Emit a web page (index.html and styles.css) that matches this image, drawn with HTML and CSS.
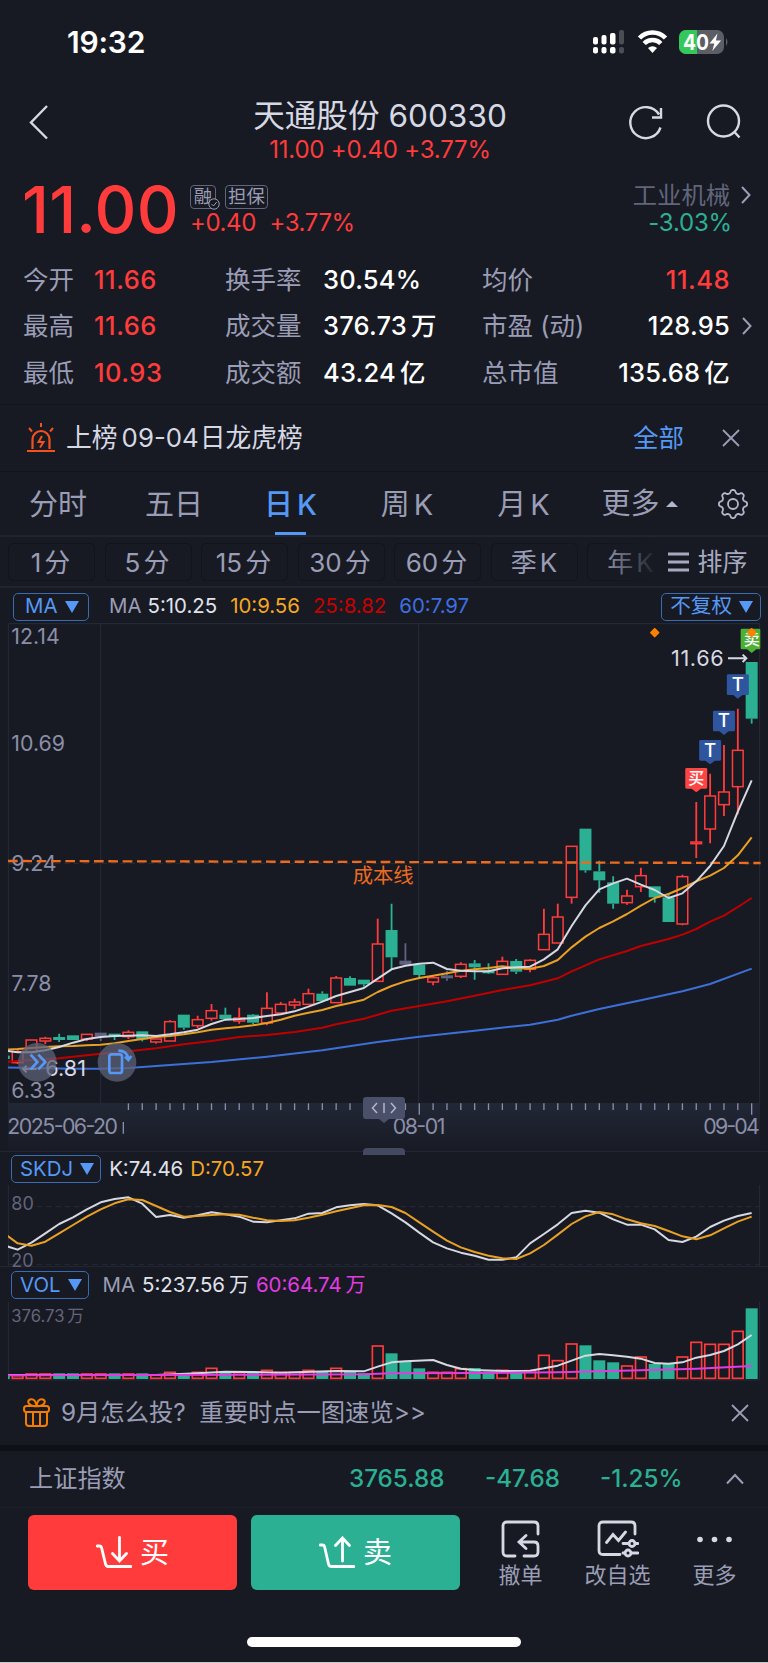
FILE: index.html
```html
<!DOCTYPE html>
<html lang="zh-CN">
<head>
    <meta charset="UTF-8">
    <meta name="viewport" content="width=device-width, initial-scale=1.0">
    <title>天通股份 600330</title>
    <link rel="stylesheet" href="styles.css">
</head>
<body>
    <div class="status-bar">
        <span class="time">19:32</span>
        <svg class="status-icons" width="140" height="30" viewBox="0 0 140 30">
            <g fill="#fff">
                <rect x="3" y="10" width="5" height="7.500" rx="2"/>
                <rect x="11.5" y="8" width="5" height="9.500" rx="2"/>
                <rect x="20" y="6" width="5.5" height="11.500" rx="2"/>
                <rect x="3" y="20" width="5" height="6.500" rx="2"/>
                <rect x="11.5" y="20" width="5" height="6.500" rx="2"/>
                <rect x="20" y="20" width="5.5" height="6.500" rx="2"/>
            </g>
            <g fill="#4b4d55">
                <rect x="29" y="3" width="5" height="14.500" rx="2"/>
                <rect x="29" y="20" width="5" height="6.500" rx="2"/>
            </g>
            <g fill="none" stroke="#fff" stroke-width="4.6">
                <path d="M49.5 11a18 18 0 0 1 26 0"/>
                <path d="M54.2 16.500a11.6 11.6 0 0 1 16.6 0"/>
            </g>
            <path d="M58 21a6.6 6.6 0 0 1 9 0l-4.5 5z" fill="#fff"/>
            <rect x="89" y="3" width="45" height="24" rx="7" fill="#5c5e66"/>
            <path d="M96 3h11v24H96a7 7 0 0 1-7-7V10a7 7 0 0 1 7-7z" fill="#34c759"/>
            <path d="M136 11q3 4 0 8z" fill="#5c5e66"/>
            <text x="93" y="22.500" class="battery" textLength="26" lengthAdjust="spacingAndGlyphs">40</text>
            <path d="M127.500 6.500l-8 10h4.800l-2 7.500 8.800-10.500h-5.200z" fill="#fff"/>
        </svg>
    </div>

    <header class="header">
        <svg class="back" width="24" height="40" viewBox="0 0 24 40"><path d="M19 4L3 20.500l16 16" /></svg>
        <div class="title">
            <h1>天通股份 600330</h1>
            <p>11.00 +0.40 +3.77%</p>
        </div>
        <div class="header-icons">
            <svg width="40" height="40" viewBox="0 0 40 40"><path d="M34.500 25.500a15.500 15.500 0 1 1-1.500-13M35 6v9.500h-9"/></svg>
            <svg width="40" height="40" viewBox="0 0 40 40"><circle cx="19.500" cy="19" r="15.500"/><path d="M30.500 30l5 5.500"/></svg>
        </div>
    </header>

    <section class="quote">
        <div class="price">11.00</div>
        <div class="price-side">
            <div class="tags">
                <span class="tag">融<svg width="12" height="12" viewBox="0 0 12 12"><circle cx="6" cy="6" r="5.200"/><path d="M3.500 6l2 2 3.200-4"/></svg></span>
                <span class="tag wide">担保</span>
            </div>
            <div class="change"><span>+0.40</span><span>+3.77%</span></div>
        </div>
        <div class="industry">
            <div>工业机械</div>
            <div class="green">-3.03%</div>
        </div>
        <svg class="arrow" width="12" height="20" viewBox="0 0 12 20"><path d="M2 2l7.500 8L2 18"/></svg>
    </section>

    <section class="stats">
        <span>今开</span><b class="red">11.66</b><span>换手率</span><b>30.54%</b><span>均价</span><b class="red right">11.48</b><i></i>
        <span>最高</span><b class="red">11.66</b><span>成交量</span><b>376.73<em>万</em></b><span>市盈 (动)</span><b class="right">128.95</b><svg class="arrow" width="12" height="20" viewBox="0 0 12 20"><path d="M2 2l7.500 8L2 18"/></svg>
        <span>最低</span><b class="red">10.93</b><span>成交额</span><b>43.24<em>亿</em></b><span>总市值</span><b class="right">135.68<em>亿</em></b><i></i>
    </section>

    <section class="notice">
        <svg width="28" height="30" viewBox="0 0 28 30" fill="none" stroke="#f4511e" stroke-width="2">
            <path d="M5.500 26V16.500a8.500 8.500 0 0 1 17 0V26M0 28h28" stroke-width="2.200"/>
            <path d="M14 0v4M2 5l3 3.500M26 5l-3 3.500"/>
            <path d="M15 13l-3.500 6h5L13 24.500"/>
        </svg>
        <p>上榜<span>09-04</span>日龙虎榜</p>
        <a>全部</a>
        <svg class="close" width="20" height="20" viewBox="0 0 20 20"><path d="M2 2l16 16M18 2L2 18"/></svg>
    </section>

    <nav class="tabs">
        <span>分时</span>
        <span>五日</span>
        <span class="active">日<i>K</i></span>
        <span>周<i>K</i></span>
        <span>月<i>K</i></span>
        <span class="more">更多<svg width="12" height="8" viewBox="0 0 12 8"><path d="M0 7l6-6 6 6z" fill="#b4b7cc"/></svg></span>
        <svg class="gear" id="gear" width="32" height="32" viewBox="-16 -16 32 32"></svg>
    </nav>

    <div class="periods">
        <span>1<i>分</i></span>
        <span>5<i>分</i></span>
        <span>15<i>分</i></span>
        <span>30<i>分</i></span>
        <span>60<i>分</i></span>
        <span>季<i>K</i></span>
        <span>年<i>K</i></span>
        <div class="sort">
            <svg width="22" height="20" viewBox="0 0 22 20"><path d="M0 2h21M0 10h21M0 18h21" stroke="#a6a9c0" stroke-width="2.800"/></svg>
            排序
        </div>
    </div>

    <div class="legend ma-legend">
        <span class="pill">MA<i></i></span>
        <span class="name">MA</span>
        <span class="c-white">5:10.25</span>
        <span class="c-orange">10:9.56</span>
        <span class="c-red">25:8.82</span>
        <span class="c-blue">60:7.97</span>
        <span class="pill last">不复权<i></i></span>
    </div>

    <!-- drawing units are a third of a pixel in all the charts -->
    <svg class="chart" width="768" height="480" viewBox="0 9 2304 1440">
        <clipPath id="plot"><rect x="24" y="0" width="2256" height="1449"/></clipPath>
        <path class="grid" d="M25 1449V11H2279V1449M302 11V1449M1256 11V1449"/>
        <path class="grid dash" d="M25 731H2279"/>
        <g class="axis">
            <text x="34" y="72">12.14</text>
            <text x="34" y="393">10.69</text>
            <text x="34" y="753">9.24</text>
            <text x="34" y="1113">7.78</text>
            <text x="34" y="1434">6.33</text>
        </g>
        <g id="candles" clip-path="url(#plot)"></g>
        <path class="cost" d="M24 723L2282 729"/>
        <text class="cost-label" x="1058" y="790">成本线</text>
        <g id="averages" clip-path="url(#plot)"></g>
        <text class="extreme" x="136" y="1369">6.81</text>
        <path class="hint" d="M110 1347H70M80 1337L69 1347L80 1357"/>
        <text class="extreme" x="2013" y="138" textLength="158">11.66</text>
        <path class="hint" d="M2184 115H2238M2228 104L2239 115L2228 126"/>
        <g id="marks"></g>
        <circle class="float" cx="112" cy="1327" r="58"/>
        <path class="float-icon" d="M92 1304L112 1326L92 1348M115 1304L136 1326L115 1348"/>
        <circle class="float" cx="351" cy="1327" r="58"/>
        <rect class="float-icon" x="328" y="1303" width="38" height="56" rx="7"/>
        <path class="float-icon" d="M355 1292Q382 1292 385 1318M375 1310L385 1320L394 1308"/>
    </svg>

    <div class="time-axis">
        <svg width="768" height="48" viewBox="0 1449 2304 144">
            <g id="ticks"></g>
            <g class="axis">
                <text x="22" y="1543" textLength="332">2025-06-20</text>
                <text x="1178" y="1543" textLength="158">08-01</text>
                <text x="2110" y="1543" textLength="169">09-04</text>
            </g>
        </svg>
        <svg class="handle" width="42" height="26" viewBox="0 0 42 26">
            <path d="M3 0h36q3 0 3 3v16q0 3-3 3H26l-5 4-5-4H3q-3 0-3-3V3q0-3 3-3z" fill="#4a5069"/>
            <path d="M14 6l-4.500 5 4.500 5M28 6l4.500 5-4.500 5M21 6v10" fill="none" stroke="#b4b7cc" stroke-width="1.500"/>
        </svg>
        <div class="grip"></div>
    </div>

    <div class="legend sub-legend">
        <span class="pill">SKDJ<i></i></span>
        <span class="c-white">K:74.46</span>
        <span class="c-orange">D:70.57</span>
    </div>
    <svg class="chart skdj" width="768" height="81" viewBox="0 285 2304 243">
        <path class="grid" d="M25 285V528M2279 285V528"/>
        <path class="grid dash" d="M110 350H2279M25 523H2279"/>
        <g class="axis dim">
            <text x="34" y="360">80</text>
            <text x="34" y="532">20</text>
        </g>
        <g id="skdj" clip-path="url(#plot)"></g>
    </svg>

    <div class="legend vol-legend">
        <span class="pill">VOL<i></i></span>
        <span class="name">MA</span>
        <span class="c-white">5:237.56<em>万</em></span>
        <span class="c-pink">60:64.74<em>万</em></span>
    </div>
    <svg class="chart vol" width="768" height="79" viewBox="0 636 2304 237">
        <path class="grid" d="M25 636V870H2279V636"/>
        <text class="axis dim small" x="34" y="697">376.73<tspan dx="8">万</tspan></text>
        <g id="volume" clip-path="url(#plot)"></g>
    </svg>

    <section class="promo">
        <svg width="27" height="29" viewBox="0 0 27 29" fill="none" stroke="#f57c00" stroke-width="2">
            <rect x="1" y="8" width="25" height="6" rx="2.500"/>
            <path d="M3 14v11q0 3 3 3h15q3 0 3-3V14M10 15v12M17 15v12M13.500 8C6 9 3 3 7 1.500S13 4 13.500 8C14 4 16 0 20 1.500S21 9 13.500 8"/>
        </svg>
        <p>9月怎么投? &nbsp;重要时点一图速览&gt;&gt;</p>
        <svg class="close" width="20" height="20" viewBox="0 0 20 20"><path d="M2 2l16 16M18 2L2 18"/></svg>
    </section>

    <section class="index-row">
        <span>上证指数</span>
        <b>3765.88</b>
        <b>-47.68</b>
        <b>-1.25%</b>
        <svg class="arrow" width="18" height="12" viewBox="0 0 18 12"><path d="M1 10.500l8-8.500 8 8.500"/></svg>
    </section>

    <footer class="actions">
        <button class="buy">
            <svg width="36" height="34" viewBox="0 0 36 34"><path d="M1 10h2.500q1.500 0 2 1.500L9.500 28q.5 2.500 3 2.500H35M23.500 1.500v23M16.500 17.500l7 7.500 7-7.500"/></svg>买
        </button>
        <button class="sell">
            <svg width="36" height="34" viewBox="0 0 36 34"><path d="M1 9h2.500q1.500 0 2 1.500L9.500 28q.5 2.500 3 2.500H35M23.500 25V2M16.500 9.500l7-7.500 7 7.500"/></svg>卖
        </button>
        <div class="action">
            <svg width="40" height="38" viewBox="0 0 40 38"><path d="M14 36H6q-4 0-4-4V6q0-4 4-4h27q4 0 4 4v8M23 36h10q4 0 4-4v-6q0-4-4-4H18.500M25 15.500L18 22l7 6.500"/></svg>
            撤单
        </div>
        <div class="action">
            <svg width="42" height="38" viewBox="0 0 42 38"><path d="M23 34.500H6q-4 0-4-4V6q0-4 4-4h28q4 0 4 4v8M9.500 22.500l6.500-8 5.500 6L28.500 12M26 23.500h6M38 23.500h3M26 33h2M34 33h7"/><circle cx="35" cy="23.500" r="3"/><circle cx="31" cy="33" r="3"/></svg>
            改自选
        </div>
        <div class="action">
            <svg width="40" height="38" viewBox="0 0 40 38"><g class="dots"><circle cx="5" cy="19.500" r="2.800"/><circle cx="19.500" cy="19.500" r="2.800"/><circle cx="34" cy="19.500" r="2.800"/></g></svg>
            更多
        </div>
    </footer>
    <div class="home-bar"></div>

    <script>
        // type, high, top, bottom, low: r = up, g = down, n = flat
        const candles = [
            ['g', 1305, 1307, 1317, 1322], ['r', 1290, 1295, 1328, 1332], ['r', 1260, 1260, 1297, 1300],
            ['r', 1250, 1255, 1263, 1272], ['g', 1241, 1251, 1260, 1266], ['g', 1246, 1246, 1260, 1260],
            ['r', 1243, 1243, 1257, 1263], ['n', 1238, 1238, 1250, 1263], ['g', 1241, 1241, 1248, 1260],
            ['r', 1231, 1237, 1250, 1257], ['g', 1234, 1234, 1258, 1264], ['r', 1257, 1257, 1266, 1271],
            ['r', 1201, 1205, 1263, 1263], ['g', 1184, 1184, 1223, 1229], ['r', 1187, 1199, 1217, 1224],
            ['r', 1152, 1172, 1195, 1202], ['g', 1163, 1184, 1197, 1197], ['r', 1163, 1194, 1203, 1211],
            ['g', 1182, 1184, 1208, 1213], ['r', 1117, 1165, 1209, 1216], ['r', 1146, 1153, 1179, 1179],
            ['r', 1136, 1146, 1155, 1166], ['r', 1106, 1121, 1153, 1153], ['g', 1114, 1121, 1143, 1143],
            ['r', 1068, 1074, 1148, 1148], ['g', 1069, 1074, 1097, 1097], ['g', 1079, 1079, 1093, 1100],
            ['r', 896, 972, 1084, 1084], ['g', 851, 930, 1012, 1047], ['n', 970, 1022, 1034, 1038],
            ['g', 1030, 1034, 1065, 1073], ['r', 1068, 1073, 1086, 1096], ['n', 1052, 1066, 1075, 1082],
            ['r', 1027, 1033, 1069, 1074], ['g', 1020, 1030, 1042, 1079], ['g', 1030, 1052, 1060, 1062],
            ['r', 1010, 1024, 1063, 1063], ['g', 1017, 1023, 1055, 1062], ['r', 1018, 1021, 1048, 1057],
            ['r', 866, 943, 989, 989], ['r', 851, 891, 969, 969], ['r', 679, 679, 832, 851],
            ['g', 626, 626, 751, 758], ['g', 722, 754, 781, 818], ['g', 769, 787, 851, 866],
            ['r', 809, 828, 848, 854], ['r', 743, 767, 800, 816], ['g', 799, 799, 832, 848],
            ['g', 820, 832, 906, 906], ['r', 764, 770, 912, 916], ['r', 546, 666, 671, 714],
            ['r', 461, 528, 627, 670], ['r', 375, 516, 554, 588], ['r', 266, 391, 500, 583],
            ['g', 126, 126, 296, 311]
        ];
        const ma5 = [1291, 1297, 1297, 1291, 1281, 1268, 1257, 1251, 1248, 1247, 1246, 1248, 1243, 1237, 1229, 1212, 1199, 1197, 1194, 1188, 1183, 1174, 1160, 1145, 1128, 1116, 1104, 1076, 1048, 1037, 1031, 1028, 1047, 1052, 1054, 1054, 1045, 1042, 1040, 1018, 988, 918, 856, 808, 790, 776, 794, 810, 834, 820, 784, 738, 678, 575, 481];
        const ma10 = [1289, 1287, 1284, 1281, 1279, 1278, 1276, 1274, 1270, 1263, 1257, 1251, 1248, 1243, 1237, 1229, 1225, 1221, 1216, 1209, 1199, 1187, 1178, 1170, 1158, 1149, 1139, 1116, 1098, 1084, 1074, 1067, 1060, 1052, 1048, 1044, 1039, 1044, 1046, 1038, 1020, 982, 950, 924, 904, 882, 857, 834, 822, 804, 784, 767, 744, 706, 652];
        const ma25 = [[0, 1326], [1, 1323], [4, 1315], [7, 1301], [9, 1294], [11, 1285], [13, 1273], [15, 1263], [17, 1251], [19, 1245], [21, 1236], [23, 1223], [24, 1213], [26, 1196], [27, 1184], [28, 1172], [30, 1158], [32, 1144], [34, 1127], [36, 1110], [38, 1096], [40, 1075], [41, 1054], [43, 1018], [45, 993], [46, 978], [48, 957], [49, 944], [50, 927], [51, 905], [52, 887], [53, 861], [54, 834]];
        const ma60 = [[0, 1342], [3, 1345], [5, 1346], [7, 1346], [9, 1344], [11, 1338], [15, 1326], [19, 1310], [23, 1291], [27, 1266], [30, 1250], [34, 1232], [38, 1214], [40, 1199], [41, 1187], [43, 1167], [46, 1141], [49, 1114], [51, 1092], [54, 1046]];
        const k = [466, 479, 458, 430, 402, 382, 358, 337, 327, 322, 341, 381, 375, 383, 376, 367, 373, 380, 395, 397, 391, 385, 371, 369, 352, 346, 342, 346, 370, 397, 428, 457, 475, 488, 497, 509, 509, 502, 460, 432, 403, 369, 362, 368, 388, 404, 404, 418, 450, 456, 440, 411, 392, 378, 369];
        const d = [429, 460, 467, 455, 430, 405, 380, 358, 340, 328, 330, 348, 366, 380, 378, 375, 373, 374, 383, 391, 393, 391, 383, 374, 364, 355, 346, 345, 351, 369, 397, 425, 452, 472, 486, 497, 505, 507, 490, 465, 434, 402, 379, 366, 373, 388, 400, 408, 423, 439, 448, 436, 415, 395, 380];
        const volume = [857, 857, 852, 852, 850, 850, 852, 852, 850, 852, 850, 855, 847, 852, 847, 835, 845, 848, 848, 841, 847, 847, 841, 845, 835, 845, 850, 768, 790, 815, 835, 847, 847, 836, 834, 845, 841, 845, 842, 796, 812, 762, 766, 811, 817, 828, 801, 822, 822, 801, 757, 763, 763, 724, 655];
        const vol5 = [[0, 855], [11, 855], [14, 850], [16, 845], [18, 846], [20, 848], [24, 843], [26, 844], [27, 830], [28, 817], [29, 814], [31, 810], [32, 825], [33, 836], [34, 840], [36, 843], [38, 842], [39, 835], [40, 827], [41, 812], [42, 797], [43, 792], [44, 796], [45, 800], [46, 806], [47, 819], [48, 821], [49, 817], [50, 803], [51, 795], [52, 783], [53, 763], [54, 735]];
        const vol60 = [[0, 856], [26, 853], [28, 850], [34, 849], [40, 847], [46, 841], [50, 836], [54, 828]];

        const x = i => 2255 - (54 - i) * 41.55;
        const put = (id, html) => { document.getElementById(id).innerHTML = html; };

        function line(cls, data) {
            const points = data.map((p, i) => Array.isArray(p) ? `${x(p[0])},${p[1]}` : `${x(i)},${p}`);
            return `<polyline class="line ${cls}" points="${points.join(' ')}"/>`;
        }

        function bar(type, i, top, bottom) {
            if (type === 'r') {
                return `<rect class="r" x="${x(i) - 16}" y="${top}" width="32" height="${bottom - top}"/>`;
            }
            return `<rect class="${type}" x="${x(i) - 18}" y="${top}" width="36" height="${bottom - top}"/>`;
        }

        put('candles', candles.map(([type, high, top, bottom, low], i) =>
            `<path class="wick ${type}" d="M${x(i)} ${high}V${top}M${x(i)} ${bottom}V${low}"/>` + bar(type, i, top, bottom)
        ).join(''));

        put('averages', line('s-blue', ma60) + line('s-red', ma25) + line('s-orange', ma10) + line('s-white', ma5));
        put('skdj', line('s-white', k) + line('s-orange', d));

        put('volume', volume.map((top, i) => {
            let type = candles[i][0];
            if (type === 'n') type = i === 29 ? 'g' : 'r';
            return type === 'r' ? bar(type, i, top, 865) : bar(type, i, top, 867);
        }).join('') + line('s-white', vol5) + line('s-pink', vol60));

        // trade marks above the candles
        const marks = [[50, 444, '买', '#ff4444'], [51, 360, 'T', '#2f559f'], [52, 272, 'T', '#2f559f'], [53, 163, 'T', '#2f559f'], [54, 26, '卖', '#4cb034']];
        put('marks', marks.map(([i, y, label, color]) => {
            const w = i === 54 ? 59 : 66;
            return `<path fill="${color}" d="M${x(i) - 33} ${y + 4}q0-4 4-4h${w - 8}q4 0 4 4v54q0 4-4 4H${x(i) + 14}l-14 11-14-11H${x(i) - 29}q-4 0-4-4z"/>` +
                `<text class="mark" x="${x(i)}" y="${y + (label === 'T' ? 50 : 49)}" font-size="${label === 'T' ? 56 : 48}">${label}</text>`;
        }).join('') + [47, 54].map(i => `<path class="diamond" d="M${x(i)} 27L${x(i) + 11} 38L${x(i)} 49L${x(i) - 11} 38z"/>`).join(''));

        let ticks = '<path d="M370 1506V1541"/>';
        for (let i = 9; i <= 54; i++) {
            ticks += `<path d="M${x(i)} 1450V${i === 30 || i === 54 ? 1484 : 1470}"/>`;
        }
        put('ticks', ticks);

        // eight-toothed gear outline
        const gear = [];
        for (let a = 0; a < 360; a += 3) {
            const r = 12.6 + 1.6 * Math.tanh(1.6 * Math.cos(a * 8 * Math.PI / 180));
            gear.push((r * Math.sin(a * Math.PI / 180)).toFixed(2) + ',' + (-r * Math.cos(a * Math.PI / 180)).toFixed(2));
        }
        put('gear', `<polygon points="${gear.join(' ')}"/><circle r="5"/>`);
    </script>
</body>
</html>
```
FILE: styles.css
```css
* {
    box-sizing: border-box;
}

body {
    margin: 0;
    width: 768px;
    height: 1663px;
    overflow: hidden;
    background: #171a22;
    color: #9a9db5;
    font-family: Inter, "Noto Sans CJK SC", sans-serif;
    font-size: 25.5px;
    line-height: 1;
    border-bottom: 1px solid #c9cacc;
}

svg {
    display: block;
    flex: none;
}

h1, p {
    margin: 0;
    font-weight: 400;
}

i, em {
    font-style: normal;
}

em {
    margin-left: 4px;
}

b {
    font-weight: 500;
}

.red {
    color: #ff3b3b;
}

.green {
    color: #2bb094;
}

/* top */
.status-bar {
    display: flex;
    justify-content: space-between;
    height: 84px;
    padding: 27px 38px 0 67px;
}

.time {
    color: #fff;
    font-size: 30px;
    font-weight: 600;
    letter-spacing: -0.2px;
}

.battery {
    fill: #fff;
    font-size: 22px;
    font-weight: 700;
}

.header {
    display: grid;
    grid-template-columns: 112px 1fr 112px;
    height: 92px;
    padding: 0 24px 0 28px;
}

.header svg,
.arrow,
.close {
    fill: none;
    stroke: #d6d8e4;
    stroke-width: 2.4;
}

.back {
    margin-top: 18px;
}

.title {
    text-align: center;
    white-space: nowrap;
    color: #d6d8e4;
    margin-left: -12px;
}

.title h1 {
    font-size: 31.6px;
    line-height: 36px;
    margin-top: 14px;
}

.title p {
    color: #ff3b3b;
    font-size: 24px;
    line-height: 31px;
    letter-spacing: -0.2px;
}

.header-icons {
    display: flex;
    justify-content: flex-end;
    gap: 38px;
    padding-top: 18px;
}

.quote {
    display: flex;
    height: 82px;
    padding: 0 16px 0 22px;
}

.price {
    width: 168px;
    color: #ff3b3b;
    font-size: 65px;
    font-weight: 500;
    line-height: 68px;
    letter-spacing: 0.2px;
}

.tags {
    display: flex;
    gap: 9px;
    padding-top: 9px;
}

.tag {
    position: relative;
    width: 26px;
    height: 24px;
    border: 1.5px solid #62657c;
    border-radius: 4px;
    font-size: 18.5px;
    line-height: 21px;
    text-align: center;
}

.tag.wide {
    width: 43px;
}

.tag svg {
    position: absolute;
    right: -5px;
    bottom: -2px;
    fill: #171a22;
    stroke: #9a9db5;
}

.change {
    display: flex;
    gap: 13.5px;
    color: #ff3b3b;
    font-size: 24px;
    line-height: 26px;
    padding-top: 1px;
    letter-spacing: -0.4px;
}

.industry {
    margin-left: auto;
    margin-right: 10px;
    padding-top: 5px;
    text-align: right;
    font-size: 24.3px;
    line-height: 28px;
    color: #62657c;
}

.industry .green {
    color: #2bb094;
    font-size: 24px;
    letter-spacing: -0.2px;
    margin-right: -2px;
}

.arrow {
    stroke: #9a9db5;
    stroke-width: 2;
}

.quote .arrow {
    margin-top: 9px;
}

.stats {
    display: grid;
    grid-template-columns: 71px 131px 98px 159px 101px 147px 1fr;
    grid-template-rows: repeat(3, 46.5px);
    align-items: center;
    height: 149px;
    margin-top: -2px;
    padding-left: 23px;
    white-space: nowrap;
    border-bottom: 1px solid #12141a;
}

.stats b {
    color: #fff;
    letter-spacing: 0.2px;
}

.stats b.red {
    color: #ff3b3b;
    letter-spacing: 0.5px;
}

.stats .right {
    text-align: right;
}

.stats .arrow {
    margin-left: 11px;
}

.notice {
    display: flex;
    align-items: center;
    height: 67px;
    padding: 0 27px;
    border-bottom: 1px solid #12141a;
    color: #d6d8e4;
}

.notice p {
    margin-left: 11px;
    font-size: 25.8px;
}

.notice p span {
    margin: 0 1px 0 4px;
}

.notice a {
    margin-left: auto;
    margin-right: 37px;
    color: #5598f5;
}

.close {
    stroke: #9a9db5;
    stroke-width: 1.8;
}

/* tabs */
.tabs {
    display: grid;
    grid-template-columns: 116px 116px 117px 116px 117px 115px 1fr;
    align-items: center;
    height: 65px;
    border-bottom: 2px solid #20242f;
    font-size: 29px;
    text-align: center;
}

.tabs span {
    line-height: 66px;
    height: 63px;
}

.tabs i {
    margin-left: 4px;
}

.tabs .active {
    color: #5598f5;
    font-weight: 500;
}

.tabs .active::after {
    content: "";
    display: block;
    width: 31px;
    height: 3px;
    margin: -6px auto 0;
    background: #5598f5;
}

.more {
    display: flex;
    align-items: center;
    justify-content: center;
    gap: 6px;
}

.gear {
    margin: 0 auto;
    fill: none;
    stroke: #b4b7cc;
    stroke-width: 1.8;
}

.periods {
    display: flex;
    align-items: center;
    gap: 9.5px;
    height: 51px;
    padding-left: 8px;
    border-bottom: 2px solid #20242f;
    font-size: 26px;
}

.periods span {
    flex: none;
    width: 87px;
    height: 38px;
    border: 1px solid #12141a;
    border-radius: 5px;
    line-height: 37px;
    text-align: center;
}

.periods span:not(:nth-child(n + 6)) {
    padding-right: 2px;
}

.periods i {
    margin-left: 3px;
}

.sort {
    display: flex;
    align-items: center;
    gap: 8px;
    flex: none;
    z-index: 1;
    width: 165px;
    height: 44px;
    margin-left: -84px;
    padding-left: 68px;
    padding-top: 1px;
    background: linear-gradient(90deg, rgba(23, 26, 34, 0), #171a22 36%);
    color: #a6a9c0;
    font-size: 25px;
}

/* chart legends */
.legend {
    display: flex;
    align-items: center;
    font-size: 20.4px;
    white-space: nowrap;
}

.pill {
    display: flex;
    align-items: center;
    gap: 7px;
    height: 28px;
    padding: 0 7px 0 11px;
    border: 1.5px solid #386bb0;
    border-radius: 5px;
    color: #5598f5;
}

.pill i {
    border: 7.500px solid transparent;
    border-top: 12px solid #5598f5;
    border-bottom: 0;
}

.pill.last {
    margin-left: auto;
    gap: 7px;
    padding: 0 7px 0 8px;
    font-size: 20.6px;
}

.ma-legend {
    height: 35px;
    padding: 2px 7px 0 13px;
    gap: 13px;
}

.ma-legend .pill:first-child {
    width: 76px;
}

.ma-legend .name {
    margin-left: 7px;
    margin-right: -7px;
}

.sub-legend {
    height: 34px;
    padding-left: 11px;
    padding-top: 1px;
    gap: 7px;
    border-top: 1px solid #222632;
}

.sub-legend .pill,
.vol-legend .pill {
    padding: 0 6px 0 8px;
    gap: 7px;
}

.sub-legend .c-white {
    margin-left: 1px;
}

.vol-legend {
    height: 36px;
    padding-left: 11px;
    padding-top: 1px;
    gap: 7px;
    border-top: 1px solid #222632;
}

.vol-legend .name {
    margin-left: 7px;
}

.vol-legend em {
    margin-left: 4px;
    font-size: 20px;
}

.c-white { color: #e0e2ec; }
.c-orange { color: #f5a623; }
.c-red { color: #c80000; }
.c-blue { color: #3d6fe0; }
.c-pink { color: #e23be2; }

/* charts */
.grid {
    fill: none;
    stroke: #272b3a;
    stroke-width: 3;
}

.grid.dash {
    stroke-dasharray: 16 12;
}

.axis {
    fill: #8b8ea8;
    font-size: 64px;
}

.axis.dim {
    fill: #62657c;
    font-size: 54px;
}

.axis.small {
    font-size: 50px;
}

.skdj {
    overflow: visible;
}

.r {
    fill: none;
    stroke: #ff3b3b;
    stroke-width: 4.5;
}

.g {
    fill: #2bb094;
}

.n {
    fill: #5f6280;
}

.wick {
    stroke-width: 5.5;
}

.wick.g {
    stroke: #2bb094;
}

.wick.n {
    stroke: #5f6280;
}

.line {
    fill: none;
    stroke-width: 6;
    stroke-linejoin: round;
}

.s-white { stroke: #d6d8e2; }
.s-orange { stroke: #e9a024; }
.s-red { stroke: #c00000; }
.s-blue { stroke: #3d6fd8; }
.s-pink { stroke: #e23be2; }

.cost {
    stroke: #ed6b1f;
    stroke-width: 7;
    stroke-dasharray: 29 14;
}

.cost-label {
    fill: #ed6b1f;
    font-size: 61px;
}

.extreme {
    fill: #d6d8e4;
    font-size: 65px;
}

.hint {
    fill: none;
    stroke: #d6d8e4;
    stroke-width: 6;
}

.mark {
    fill: #fff;
    font-weight: 500;
    text-anchor: middle;
}

.diamond {
    fill: #ff7f00;
    stroke: #ff7f00;
    stroke-width: 6;
    stroke-linejoin: round;
}

.float {
    fill: #5d6178;
    fill-opacity: 0.75;
}

.float-icon {
    fill: none;
    stroke: #5598f5;
    stroke-width: 8;
}

.time-axis {
    position: relative;
    height: 48px;
    background: linear-gradient(#222736, #181b24);
    margin: 0 8px;
}

.time-axis > svg:first-child {
    margin-left: -8px;
}

#ticks {
    stroke: #8b8ea8;
    stroke-width: 4;
}

.handle {
    position: absolute;
    left: 355px;
    top: -6px;
}

.grip {
    position: absolute;
    left: 355px;
    bottom: -4px;
    width: 42px;
    height: 7px;
    border-radius: 4px 4px 0 0;
    background: #434960;
}

.vol .r {
    stroke-width: 5;
}

/* bottom */
.promo {
    display: flex;
    align-items: center;
    height: 64px;
    padding: 0 18px 1px 23px;
    font-size: 24.3px;
}

.promo p {
    margin-left: 11px;
}

.promo .close {
    margin-left: auto;
}

.index-row {
    display: grid;
    grid-template-columns: 320px 136px 115px 126px 1fr;
    align-items: center;
    height: 63px;
    padding-left: 29px;
    border-top: 6px solid #0e1017;
    border-bottom: 1px solid #1c1f29;
    font-size: 24.2px;
}

.index-row b {
    color: #2bb094;
}

.actions {
    display: flex;
    height: 129px;
    padding: 7px 0 0 28px;
}

.actions button {
    display: flex;
    align-items: center;
    justify-content: center;
    gap: 8px;
    width: 209px;
    height: 75px;
    margin-right: 14px;
    padding: 0;
    border: 0;
    border-radius: 6px;
    color: #fff;
    font: 29px/1 Inter, "Noto Sans CJK SC", sans-serif;
}

.actions svg {
    fill: none;
    stroke: #d6d8e4;
    stroke-width: 2.8;
    stroke-linecap: round;
}

.actions button svg {
    stroke: #fff;
}

.buy {
    background: #ff3b3b;
}

.sell {
    background: #2bb094;
}

.action {
    display: flex;
    flex-direction: column;
    align-items: center;
    gap: 6px;
    width: 97px;
    padding-top: 5px;
    font-size: 22px;
}

.sell + .action {
    margin-left: -2px;
}

.actions .dots {
    fill: #d6d8e4;
    stroke: none;
}

.home-bar {
    width: 274px;
    height: 10px;
    margin: 0 auto;
    border-radius: 5px;
    background: #fff;
}
```
